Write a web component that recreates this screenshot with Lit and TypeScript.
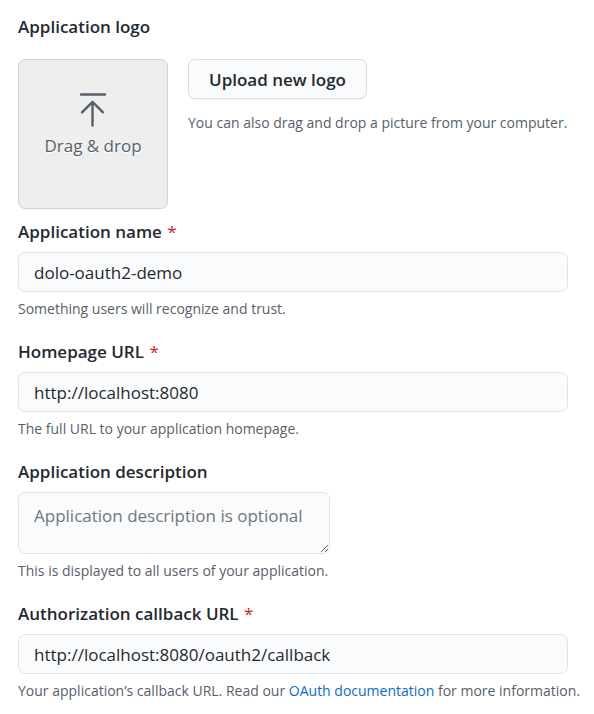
import { LitElement, html, css, nothing } from "lit";
import { customElement, property } from "lit/decorators.js";

@customElement("form-field")
class FormField extends LitElement {
  @property() label = "";
  @property() value = "";
  @property() placeholder = "";
  @property({ type: Boolean }) required = false;
  @property({ type: Boolean }) multiline = false;

  static styles = css`
    :host {
      display: block;
    }
    .label {
      display: block;
      margin-bottom: 9px;
      font-size: 17px;
      font-weight: 600;
      line-height: 22px;
      color: #24292f;
    }
    .mark {
      margin-left: 1px;
      font-weight: 400;
      color: #cf222e;
    }
    .control {
      display: block;
      box-sizing: border-box;
      border: 1px solid #e1e4e8;
      border-radius: 7px;
      background: #fafbfc;
      color: #24292f;
      font: inherit;
      font-size: 17px;
      line-height: 24px;
      outline: none;
    }
    .line {
      width: calc(100% - 20px);
      height: 40px;
      padding: 0 15px;
    }
    .area {
      width: 312px;
      max-width: 100%;
      height: 62px;
      padding: 11px 15px;
      overflow: hidden;
      resize: both;
    }
    .control::placeholder {
      color: #6e7781;
      opacity: 1;
    }
    .hint {
      margin: 6px 0 0;
      font-size: 14px;
      line-height: 22px;
      color: #57606a;
    }
  `;

  render() {
    return html`
      <label class="label" for="control"
        >${this.label}${this.required
          ? html` <span class="mark">*</span>`
          : nothing}</label
      >
      ${this.multiline
        ? html`<textarea
            id="control"
            class="control area"
            placeholder=${this.placeholder}
            aria-describedby="hint"
          ></textarea>`
        : html`<input
            id="control"
            class="control line"
            type="text"
            spellcheck="false"
            .value=${this.value}
            ?required=${this.required}
            aria-describedby="hint"
          />`}
      <p class="hint" id="hint"><slot></slot></p>
    `;
  }
}

@customElement("app-root")
class AppRoot extends LitElement {
  static styles = css`
    :host {
      display: block;
      padding: 16px 6px 12px 18px;
      background: #ffffff;
      font-family: "Open Sans", "Noto Sans", sans-serif;
      color: #24292f;
    }
    .heading {
      margin: 0 0 21px;
      font-size: 17px;
      font-weight: 600;
      line-height: 22px;
    }
    .logo {
      display: flex;
      gap: 20px;
      margin-bottom: 12px;
    }
    .drop {
      display: flex;
      flex: none;
      flex-direction: column;
      align-items: center;
      box-sizing: border-box;
      width: 150px;
      height: 150px;
      padding-top: 32px;
      border: 1px solid #d0d3d8;
      border-radius: 7px;
      background: #eeeeee;
      color: #57606a;
      font-size: 17px;
      line-height: 24px;
      text-shadow: 0 1px 0 #ffffff;
    }
    .arrow {
      display: block;
      width: 30px;
      height: 36px;
      margin-bottom: 6px;
    }
    .upload {
      display: block;
      height: 40px;
      padding: 0 20px;
      border: 1px solid #d9dcdd;
      border-radius: 7px;
      background: #fafbfc;
      box-shadow: 0 1px 0 rgba(27, 31, 36, 0.04);
      color: #24292f;
      font: inherit;
      font-size: 17px;
      font-weight: 600;
    }
    .note {
      margin: 13px 0 0;
      font-size: 14px;
      line-height: 22px;
      color: #57606a;
    }
    .fields {
      display: flex;
      flex-direction: column;
      gap: 21px;
    }
    .link {
      color: #0969da;
      text-decoration: none;
    }
  `;

  render() {
    return html`
      <h2 class="heading">Application logo</h2>
      <div class="logo">
        <div class="drop">
          <svg
            class="arrow"
            viewBox="0 0 30 36"
            fill="none"
            stroke="#57606a"
            stroke-width="2.4"
            stroke-linecap="round"
            stroke-linejoin="round"
            aria-hidden="true"
          >
            <path d="M3 2.5H27M14.5 33.5V10M4 20.3L14.5 9.8L25 20.3" />
          </svg>
          Drag &amp; drop
        </div>
        <div>
          <button class="upload" type="button">Upload new logo</button>
          <p class="note">
            You can also drag and drop a picture from your computer.
          </p>
        </div>
      </div>
      <form class="fields">
        <form-field label="Application name" value="dolo-oauth2-demo" required
          >Something users will recognize and trust.</form-field
        >
        <form-field label="Homepage URL" value="http://localhost:8080" required
          >The full URL to your application homepage.</form-field
        >
        <form-field
          label="Application description"
          placeholder="Application description is optional"
          multiline
          >This is displayed to all users of your application.</form-field
        >
        <form-field
          label="Authorization callback URL"
          value="http://localhost:8080/oauth2/callback"
          required
          >Your application’s callback URL. Read our
          <a class="link" href="#oauth">OAuth documentation</a> for more
          information.</form-field
        >
      </form>
    `;
  }
}
